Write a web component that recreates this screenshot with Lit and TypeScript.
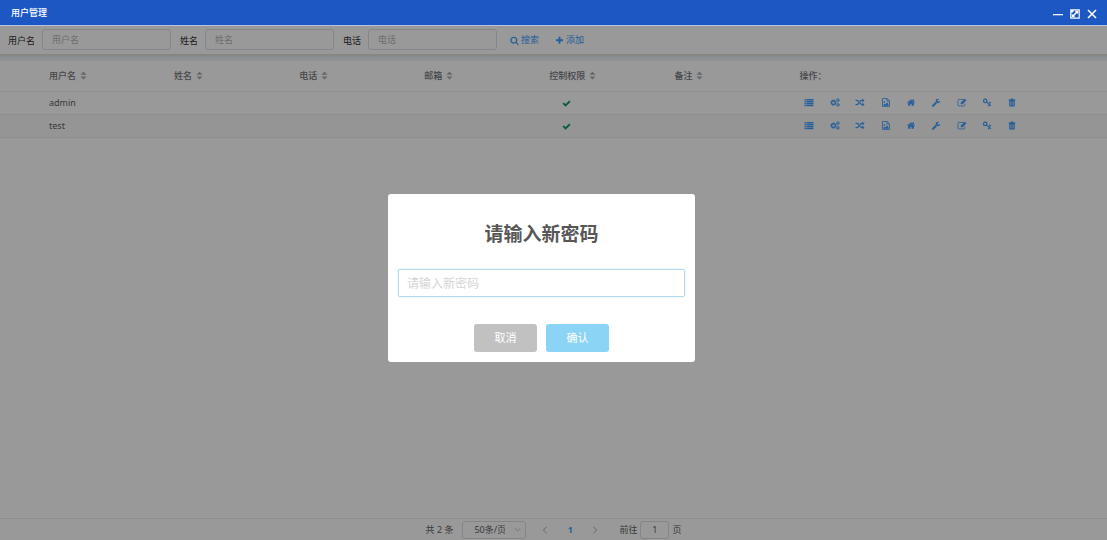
import { LitElement, html, css, svg, nothing } from "lit";
import { customElement, property, state } from "lit/decorators.js";

const ICONS: Record<string, { box: string; body: unknown }> = {
  search: {
    box: "0 0 1792 1792",
    body: svg`<path d="M1216 832q0-185-131.500-316.500t-316.500-131.500-316.500 131.500-131.500 316.500 131.500 316.500 316.500 131.500 316.500-131.500 131.500-316.500zm512 832q0 52-38 90t-90 38q-54 0-90-38l-343-342q-179 124-399 124-143 0-273.500-55.500t-225-150-150-225-55.500-273.500 55.500-273.500 150-225 225-150 273.500-55.500 273.500 55.500 225 150 150 225 55.500 273.500q0 220-124 399l343 343q37 37 37 90z"/>`,
  },
  plus: {
    box: "0 0 1792 1792",
    body: svg`<path d="M1600 736v192q0 40-28 68t-68 28h-416v416q0 40-28 68t-68 28h-192q-40 0-68-28t-28-68v-416h-416q-40 0-68-28t-28-68v-192q0-40 28-68t68-28h416v-416q0-40 28-68t68-28h192q40 0 68 28t28 68v416h416q40 0 68 28t28 68z"/>`,
  },
  check: {
    box: "0 0 1792 1792",
    body: svg`<path d="M1671 566q0 40-28 68l-724 724-136 136q-28 28-68 28t-68-28l-136-136-362-362q-28-28-28-68t28-68l136-136q28-28 68-28t68 28l294 295 656-657q28-28 68-28t68 28l136 136q28 28 28 68z"/>`,
  },
  list: {
    box: "0 0 16 16",
    body: svg`<path d="M0 1.600h2.400v2.400H0zM3.400 1.600H16v2.400H3.400zM0 5.100h2.400v2.400H0zM3.400 5.100H16v2.400H3.400zM0 8.600h2.400V11H0zM3.400 8.600H16V11H3.400zM0 12.100h2.400v2.400H0zM3.400 12.100H16v2.400H3.400z"/>`,
  },
  cogs: {
    box: "0 0 16 16",
    body: svg`<g fill="none" stroke="currentColor"><circle cx="5.200" cy="8.200" r="3.300" stroke-width="2.400"/><circle cx="5.200" cy="8.200" r="4.900" stroke-width="1.400" stroke-dasharray="1.920 1.920"/><circle cx="13" cy="3.900" r="1.900" stroke-width="1.600"/><circle cx="13" cy="3.900" r="3" stroke-width="1" stroke-dasharray="1.570 1.570"/><circle cx="13" cy="12.100" r="1.900" stroke-width="1.600"/><circle cx="13" cy="12.100" r="3" stroke-width="1" stroke-dasharray="1.570 1.570"/></g>`,
  },
  random: {
    box: "0 0 16 16",
    body: svg`<path fill="none" stroke="currentColor" stroke-width="2.300" d="M0 4.300h2.200c4.800 0 4.800 7.400 9.600 7.400H13M0 11.700h2.200c1.800 0 2.900-1 3.700-2.500M8 6.400c.8-1.200 2-2.100 3.800-2.100H13"/><path d="M12.200.700 16 4.300l-3.800 3.600zM12.200 8.100 16 11.700l-3.800 3.600z"/>`,
  },
  image: {
    box: "0 0 16 16",
    body: svg`<path fill="none" stroke="currentColor" stroke-width="1.500" d="M1.800.800h8L14.200 5v10.200H1.800zM9.500.900v4.300h4.500"/><path d="M3.600 13.600v-2l1.600-1.600 1.500 1.400 3.300-3.300 2.400 2.400v3.100z"/><circle cx="5.200" cy="7.200" r="1.500"/>`,
  },
  home: {
    box: "0 0 1792 1792",
    body: svg`<path d="M1472 992v480q0 26-19 45t-45 19h-384v-384h-256v384h-384q-26 0-45-19t-19-45v-480q0-1 .5-3t.5-3l575-474 575 474q1 2 1 6zm223-69l-62 74q-8 9-21 11h-3q-13 0-21-7l-692-577-692 577q-12 8-24 7-13-2-21-11l-62-74q-8-10-7-23.500t11-21.500l719-599q32-26 76-26t76 26l244 204v-195q0-14 9-23t23-9h192q14 0 23 9t9 23v408l219 182q10 8 11 21.500t-7 23.500z"/>`,
  },
  wrench: {
    box: "0 0 1792 1792",
    body: svg`<path d="M448 1472q0-26-19-45t-45-19-45 19-19 45 19 45 45 19 45-19 19-45zm644-420l-682 682q-37 37-90 37-52 0-91-37l-106-108q-38-36-38-90 0-53 38-91l681-681q39 98 114.500 173.500t173.500 114.500zm634-435q0 39-23 106-47 134-164.500 217.500t-258.500 83.500q-185 0-316.500-131.500t-131.500-316.500 131.500-316.500 316.500-131.500q58 0 121.500 16.500t107.500 46.500q16 11 16 28t-16 28l-293 169v224l193 107q5-3 79-48.500t135.500-81 70.500-35.500q15 0 23.500 10t8.500 25z"/>`,
  },
  edit: {
    box: "0 0 16 16",
    body: svg`<path fill="none" stroke="currentColor" stroke-width="1.400" d="M11 2.500H2.600Q.8 2.500.8 4.300v8.100q0 1.800 1.800 1.800h8.500q1.800 0 1.800-1.800V10"/><path d="m5.800 8.200 7-7L16 4.200l-7 7H5.800z"/>`,
  },
  key: {
    box: "0 0 16 16",
    body: svg`<path fill-rule="evenodd" d="M4.700.900a4.200 4.200 0 0 1 4.200 4.200q0 1-.4 1.900l5.900 4.800q1.200.3.900 1.400l-.9 1q-.7.400-1.200-.3l-.6-1-.9 2q-.8.500-1.400-.2l-.8-1 1.500-1.900L7.400 8.500A4.200 4.200 0 1 1 4.700.900zm0 2.200a2 2 0 1 0 0 4 2 2 0 0 0 0-4z"/><path d="m11 7.600 2.200-1.400 2.300 2.400-2 1.500z"/>`,
  },
  trash: {
    box: "0 0 16 16",
    body: svg`<path fill-rule="evenodd" d="M5.300 2.600 6 .9h4l.7 1.700H14v1.700h-1v9.200q0 1.600-1.500 1.600h-7Q3 15.100 3 13.500V4.300H2V2.600zM5.300 6v6.800h.9V6zM7.500 6v6.800h.9V6zM9.700 6v6.800h.9V6z"/>`,
  },
  minimize: {
    box: "0 0 10 10",
    body: svg`<path d="M0 5h10v1.300H0z"/>`,
  },
  expand: {
    box: "0 0 10 10",
    body: svg`<path fill="none" stroke="currentColor" stroke-width="1.200" d="M.8.800h8.400v8.400H.8z"/><path d="M4.700 1.800h3.500v3.500L7 4.100 4.100 7l1.200 1.200H1.800V4.700L3 5.900 5.900 3z"/><path d="M1 1h2.600v1.800H2.800v.8H1z"/>`,
  },
  close: {
    box: "0 0 10 10",
    body: svg`<path fill="none" stroke="currentColor" stroke-width="1.600" d="m1 1 8 8M9 1 1 9"/>`,
  },
  down: {
    box: "0 0 10 10",
    body: svg`<path fill="none" stroke="currentColor" stroke-width="1.200" d="m1 3 4 4 4-4"/>`,
  },
  left: {
    box: "0 0 10 10",
    body: svg`<path fill="none" stroke="currentColor" stroke-width="1.200" d="M7 1 3 5l4 4"/>`,
  },
  right: {
    box: "0 0 10 10",
    body: svg`<path fill="none" stroke="currentColor" stroke-width="1.200" d="m3 1 4 4-4 4"/>`,
  },
  sort: {
    box: "0 0 8 10",
    body: svg`<path d="M4 .5 7.500 4h-7zM4 9.500.5 6h7z"/>`,
  },
};

@customElement("ui-icon")
class UiIcon extends LitElement {
  @property() name = "";

  static styles = css`
    :host {
      display: inline-flex;
      width: 9px;
      height: 9px;
    }
    svg {
      width: 100%;
      height: 100%;
      fill: currentColor;
    }
  `;

  render() {
    const icon = ICONS[this.name];
    return icon
      ? html`<svg viewBox=${icon.box} aria-hidden="true">${icon.body}</svg>`
      : nothing;
  }
}

const FILTERS = [
  { id: "username", label: "用户名" },
  { id: "name", label: "姓名" },
  { id: "phone", label: "电话" },
];

const COLUMNS = ["用户名", "姓名", "电话", "邮箱", "控制权限", "备注"];

const ACTIONS = [
  { icon: "list", label: "列表" },
  { icon: "cogs", label: "设置" },
  { icon: "random", label: "分配" },
  { icon: "image", label: "图片" },
  { icon: "home", label: "主页" },
  { icon: "wrench", label: "维护" },
  { icon: "edit", label: "编辑" },
  { icon: "key", label: "密码" },
  { icon: "trash", label: "删除" },
];

@customElement("app-root")
class AppRoot extends LitElement {
  @state() private users = ["admin", "test"];

  static styles = css`
    :host {
      display: flex;
      flex-direction: column;
      min-height: 100vh;
      font: 9px/12px "Noto Sans", "Noto Sans CJK SC", sans-serif;
      color: #606266;
      background: #fff;
    }
    * {
      box-sizing: border-box;
    }
    button,
    input,
    select {
      font: inherit;
      color: inherit;
      margin: 0;
      padding: 0;
      border: 0;
      background: none;
      outline: none;
    }
    button {
      display: inline-flex;
      align-items: center;
      justify-content: center;
      cursor: pointer;
    }
    .titlebar {
      display: flex;
      align-items: center;
      justify-content: space-between;
      height: 26px;
      padding: 0 10px 0 11px;
      color: #fff;
      background: #1d57c3;
      border-bottom: 1px solid #b8c4dc;
    }
    .title {
      margin: 0;
      font: inherit;
      font-weight: 500;
    }
    .window-tools {
      display: flex;
      gap: 7px;
      padding-top: 3px;
    }
    .window-tools ui-icon {
      width: 10px;
      height: 10px;
    }
    .content {
      position: relative;
      flex: 1;
      display: flex;
      flex-direction: column;
    }
    .filters {
      display: flex;
      align-items: center;
      gap: 9px;
      height: 30px;
      padding: 0 8px 2px;
      border-bottom: 2px solid #dfe0da;
    }
    .filter {
      display: flex;
      align-items: center;
      gap: 7px;
    }
    .filter label {
      padding-top: 4px;
      color: #303133;
    }
    .filter input {
      width: 129px;
      height: 21px;
      padding: 0 9px;
      border: 1px solid #dcdfe6;
      border-radius: 3px;
    }
    input::placeholder {
      color: #b4b8c0;
      opacity: 1;
    }
    .links {
      display: flex;
      gap: 16px;
      padding: 2px 0 0 4px;
      color: #409eff;
    }
    .links button {
      gap: 2px;
    }
    .band {
      height: 5px;
      background: linear-gradient(#e4ebf0, #f4f6f8);
    }
    table {
      width: 100%;
      table-layout: fixed;
      border-collapse: collapse;
    }
    .col-index {
      width: 40px;
    }
    .col-data {
      width: 11.3%;
    }
    th,
    td {
      padding: 0 9px;
      text-align: left;
      border-bottom: 1px solid #ebeef5;
    }
    th {
      height: 30px;
      font-weight: 500;
      color: #74777d;
    }
    td {
      height: 23px;
    }
    tbody tr:nth-child(even) {
      background: #f8f8f8;
    }
    .sort {
      gap: 4px;
      font-weight: inherit;
    }
    .sort ui-icon {
      width: 7px;
      color: #a9adb6;
    }
    .allowed {
      padding-left: 22px;
      color: #13a065;
    }
    td ui-icon {
      vertical-align: middle;
    }
    .actions {
      display: flex;
      justify-content: space-between;
      max-width: 218px;
      padding-left: 5px;
      color: #409eff;
    }
    .actions ui-icon {
      width: 10px;
    }
    .pager {
      display: flex;
      align-items: center;
      justify-content: center;
      height: 22px;
      margin-top: auto;
      border-top: 1px solid #ebeef5;
    }
    .page-size {
      position: relative;
      display: flex;
      align-items: center;
      margin: 0 15px 0 9px;
      color: #b4b8c0;
    }
    .page-size select {
      appearance: none;
      width: 64px;
      height: 18px;
      padding: 0 20px 0 11px;
      color: #606266;
      border: 1px solid #dcdfe6;
      border-radius: 3px;
    }
    .page-size ui-icon {
      position: absolute;
      right: 5px;
      width: 7px;
      height: 7px;
    }
    .pages {
      display: flex;
      gap: 17px;
      margin-right: 20px;
    }
    .pages ui-icon {
      width: 8px;
      height: 8px;
      color: #a0a3a9;
    }
    .current {
      width: 8px;
      font-weight: 700;
      color: #409eff;
    }
    .jump {
      display: flex;
      align-items: center;
      gap: 3px;
    }
    .jump input {
      width: 29px;
      height: 18px;
      text-align: center;
      border: 1px solid #dcdfe6;
      border-radius: 3px;
    }
    .overlay {
      position: absolute;
      inset: 0;
      display: flex;
      align-items: center;
      justify-content: center;
      padding: 0 24px 10px 0;
      background: rgba(0, 0, 0, 0.4);
    }
    .dialog {
      width: 307px;
      padding: 25px 10px 10px;
      text-align: center;
      background: #fff;
      border-radius: 3px;
    }
    .dialog h2 {
      margin: 0;
      font-size: 19px;
      line-height: 30px;
      font-weight: 700;
      color: #575757;
    }
    .dialog input {
      display: block;
      width: 100%;
      height: 28px;
      margin: 20px 0 27px;
      padding: 0 8px;
      font-size: 12px;
      border: 1px solid #b4dbed;
      border-radius: 2px;
      box-shadow: 0 0 2px #c4e6f5;
    }
    .dialog input::placeholder {
      color: #d5d5d5;
    }
    .buttons {
      display: flex;
      justify-content: center;
      gap: 9px;
    }
    .buttons button {
      width: 63px;
      height: 28px;
      font-size: 11px;
      color: #fff;
      border-radius: 3px;
      background: #c1c1c1;
    }
    .buttons .confirm {
      background: #8cd4f5;
    }
  `;

  private renderUser(user: string) {
    return html`<tr>
      <td></td>
      <td>${user}</td>
      <td></td>
      <td></td>
      <td></td>
      <td class="allowed"><ui-icon name="check"></ui-icon></td>
      <td></td>
      <td>
        <div class="actions">
          ${ACTIONS.map(
            (a) => html`<button aria-label=${a.label}>
              <ui-icon name=${a.icon}></ui-icon>
            </button>`
          )}
        </div>
      </td>
    </tr>`;
  }

  render() {
    return html`
      <header class="titlebar">
        <h1 class="title">用户管理</h1>
        <div class="window-tools">
          <button aria-label="最小化"><ui-icon name="minimize"></ui-icon></button>
          <button aria-label="最大化"><ui-icon name="expand"></ui-icon></button>
          <button aria-label="关闭"><ui-icon name="close"></ui-icon></button>
        </div>
      </header>
      <main class="content">
        <form class="filters">
          ${FILTERS.map(
            (f) => html`<div class="filter">
              <label for=${f.id}>${f.label}</label>
              <input id=${f.id} placeholder=${f.label} />
            </div>`
          )}
          <div class="links">
            <button type="button"><ui-icon name="search"></ui-icon>搜索</button>
            <button type="button"><ui-icon name="plus"></ui-icon>添加</button>
          </div>
        </form>
        <div class="band"></div>
        <table>
          <colgroup>
            <col class="col-index" />
            ${COLUMNS.map(() => html`<col class="col-data" />`)}
            <col />
          </colgroup>
          <thead>
            <tr>
              <th></th>
              ${COLUMNS.map(
                (c) => html`<th>
                  <button class="sort">${c}<ui-icon name="sort"></ui-icon></button>
                </th>`
              )}
              <th>操作：</th>
            </tr>
          </thead>
          <tbody>
            ${this.users.map((u) => this.renderUser(u))}
          </tbody>
        </table>
        <footer class="pager">
          <span>共 ${this.users.length} 条</span>
          <div class="page-size">
            <select aria-label="每页条数">
              <option>50条/页</option>
            </select>
            <ui-icon name="down"></ui-icon>
          </div>
          <nav class="pages">
            <button aria-label="上一页"><ui-icon name="left"></ui-icon></button>
            <button class="current">1</button>
            <button aria-label="下一页"><ui-icon name="right"></ui-icon></button>
          </nav>
          <div class="jump">
            <label for="page">前往</label>
            <input id="page" value="1" />
            <span>页</span>
          </div>
        </footer>
        <div class="overlay">
          <section class="dialog" role="dialog" aria-modal="true" aria-labelledby="dialog-title">
            <h2 id="dialog-title">请输入新密码</h2>
            <input type="password" aria-labelledby="dialog-title" placeholder="请输入新密码" />
            <div class="buttons">
              <button>取消</button>
              <button class="confirm">确认</button>
            </div>
          </section>
        </div>
      </main>
    `;
  }
}
